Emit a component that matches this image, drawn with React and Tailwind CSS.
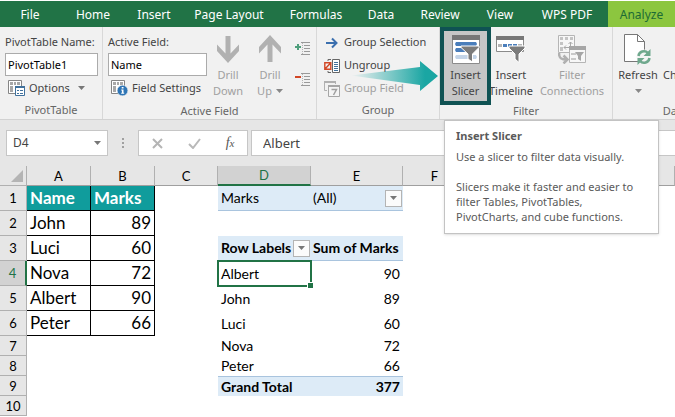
import React, { useState } from 'react';

const tabs = [
    { name: 'File', width: 'w-[60px]' },
    { name: 'Home', width: 'w-[66px]' },
    { name: 'Insert', width: 'w-[56px]' },
    { name: 'Page Layout', width: 'w-[94px]' },
    { name: 'Formulas', width: 'w-[80px]' },
    { name: 'Data', width: 'w-[50px]' },
    { name: 'Review', width: 'w-[68px]' },
    { name: 'View', width: 'w-[52px]' },
    { name: 'WPS PDF', width: 'w-[82px]' }
];

const columns = ['A', 'B', 'C', 'D', 'E', 'F', '', ''];

const rows = [
    { name: 'Name', mark: 'Marks', label: 'Marks', value: '(All)', kind: 'filter' },
    { name: 'John', mark: 89 },
    { name: 'Luci', mark: 60, label: 'Row Labels', value: 'Sum of Marks', kind: 'header' },
    { name: 'Nova', mark: 72, label: 'Albert', value: 90, kind: 'active' },
    { name: 'Albert', mark: 90, label: 'John', value: 89 },
    { name: 'Peter', mark: 66, label: 'Luci', value: 60 },
    { label: 'Nova', value: 72 },
    { label: 'Peter', value: 66 },
    { label: 'Grand Total', value: 377, kind: 'total' },
    {}
];

const Caret = ({ className = 'text-[#777777]' }) => (
    <svg width="7" height="4" viewBox="0 0 7 4" className={className} aria-hidden="true">
        <path d="M0 0h7L3.5 4z" fill="currentColor" />
    </svg>
);

const OptionsIcon = ({ info }) => (
    <svg width="17" height="16" viewBox="0 0 17 16" className="shrink-0" aria-hidden="true">
        <path d="M.5.5h13v13H.5z" fill="#fff" stroke="#858585" />
        <path d="M2 2h3v3H2zM6 2h2v3H6zM9 2h3v3H9zM2 6h3v6H2z" fill="#a8a8a8" />
        {info ? (
            <>
                <circle cx="11.5" cy="10.5" r="5.3" fill="#2e75b5" stroke="#f1f1f1" strokeWidth=".5" />
                <path d="M10.7 7h1.8v1.6h-1.8zM10.2 9.6h2.3v3.2h.7v1h-3v-1h.7v-2.2h-.7z" fill="#fff" />
            </>
        ) : (
            <>
                <path d="M7.5 6.5h9v9h-9z" fill="#fff" stroke="#41719c" />
                <path d="M7 6h10v2H7z" fill="#41719c" />
                <path d="M9 10h2v1H9zM9 13h2v1H9zM12 10h3v1h-3zM12 13h3v1h-3z" fill="#41719c" />
            </>
        )}
    </svg>
);

const DrillIcon = ({ up }) => (
    <svg width="22" height="28" viewBox="0 0 22 28" className={up ? '' : 'rotate-180'} aria-hidden="true">
        <path d="M11 0L22 12v6.500L13.500 9.500V27h-5V9.500L0 18.500V12z" fill="#b1b1b1" />
    </svg>
);

const ExpandIcon = ({ collapse }) => (
    <svg width="16" height="15" viewBox="0 0 16 15" aria-hidden="true">
        <path d="M6 1.500h9M9 4.500h6M9 7.500h6M9 10.500h6M6 13.500h9" stroke="#9a9a9a" />
        <path d="M7.500 2v11" stroke="#b5b5b5" strokeDasharray="1 1" />
        {collapse ? (
            <path d="M0 4h6v2H0z" fill="#d24726" />
        ) : (
            <path d="M2 3h2v2h2v2H4v2H2V7H0V5h2z" fill="#4f9f7c" />
        )}
    </svg>
);

const GroupSelectionIcon = () => (
    <svg width="16" height="14" viewBox="0 0 16 14" aria-hidden="true">
        <path d="M2 7h10M8 2.500L12.500 7 8 11.500" fill="none" stroke="#3b6fae" strokeWidth="2" />
    </svg>
);

const UngroupIcon = () => (
    <svg width="16" height="14" viewBox="0 0 16 14" aria-hidden="true">
        <path d="M.800 3.800h6v6.500h-6zM.800 10.300l6-6.500" fill="none" stroke="#d24726" strokeWidth="1.400" />
        <path d="M4 2V.500h3M4 12v1.500h3" fill="none" stroke="#666" />
        <path d="M8.500.500h7v13h-7z" fill="#fff" stroke="#666" />
        <path d="M10 3.500h4M10 5.500h4M10 7.500h4M10 9.500h4M10 11.500h4" stroke="#41719c" />
    </svg>
);

const GroupFieldIcon = () => (
    <svg width="16" height="16" viewBox="0 0 16 16" aria-hidden="true">
        <path d="M3 9.500H.500v-9h11V3" fill="none" stroke="#b0b0b0" />
        <path d="M0 0h12v2H0z" fill="#b0b0b0" />
        <path d="M4.500 4.500h11v11h-11z" fill="#f4f4f4" stroke="#a6a6a6" />
        <path d="M4 4h12v2H4z" fill="#a6a6a6" />
        <path d="M7.500 8.500h5L9.500 14" fill="none" stroke="#a0a0a0" strokeWidth="1.500" />
    </svg>
);

const SlicerIcon = () => (
    <svg width="28" height="29" viewBox="0 0 28 29" aria-hidden="true">
        <path d="M.500.500h27v28H.500z" fill="#fff" stroke="#8b8b8b" />
        <path d="M0 0h28v5H0z" fill="#777" />
        <path d="M4 7h20l1 2-1 2H4L3 9z" fill="#4a7ebb" />
        <path d="M4 13h10v4H4l-1-2z" fill="#4a7ebb" />
        <path d="M4 20h20l1 2-1 2H4l-1-2z" fill="#c3d4e8" />
        <path d="M9 11h18v1.500L20.500 19v8L16 24v-5l-7-6.500z" fill="#7b7b7b" stroke="#fff" />
    </svg>
);

const TimelineIcon = () => (
    <svg width="30" height="27" viewBox="0 0 30 27" aria-hidden="true">
        <path d="M.500.500h27v15H.500z" fill="#fff" stroke="#8b8b8b" />
        <path d="M0 0h28v4H0z" fill="#777" />
        <path d="M2 8h4v3H2zM22 8h4v3h-4z" fill="#b5b5b5" />
        <path d="M7 8h4v3H7zM12 8h4v3h-4zM17 8h4v3h-4z" fill="#4a7ebb" />
        <path d="M13 10h16v2l-6 6v8.500L19 23v-5l-6-6z" fill="#7b7b7b" stroke="#fff" />
    </svg>
);

const ConnectionsIcon = () => (
    <svg width="28" height="29" viewBox="0 0 28 29" aria-hidden="true">
        <path d="M.500.500h16v17H.500z" fill="#f7f7f7" stroke="#b5b5b5" />
        <path d="M2 2h3v3H2zM7 2h3v3H7zM12 2h3v3h-3zM2 7h3v3H2zM2 12h3v4H2z" fill="#c4c4c4" />
        <path d="M6 12.500h7M8 10.500l-2 2 2 2M12.500 12V7M10.500 9l2-2 2 2" fill="none" stroke="#a9a9a9" />
        <path d="M1 18c0 5 2 6.500 7 6.500M5.500 20.500l4 4-4 4" fill="none" stroke="#b0b0b0" strokeWidth="2.500" />
        <path d="M11.500 11.500h16v16h-16z" fill="#f7f7f7" stroke="#b5b5b5" />
        <path d="M11 11h17v4H11z" fill="#a6a6a6" />
        <path d="M13 18h5v2h-5zM13 23h5v2h-5z" fill="#c9c9c9" />
        <path d="M17 17h9l-3 4v5l-3-2v-3z" fill="#a6a6a6" />
    </svg>
);

const RefreshIcon = () => (
    <svg width="28" height="31" viewBox="0 0 28 31" aria-hidden="true">
        <path d="M.500.500h13l7 7v20H.500z" fill="#fff" stroke="#777" />
        <path d="M13.500.500v7h7" fill="none" stroke="#777" />
        <circle cx="20" cy="23" r="7.500" fill="#f4f4f4" />
        <path d="M14.500 22a5.500 5.500 0 019.500-3M25.500 24a5.500 5.500 0 01-9.500 3" fill="none" stroke="#6fa88d" strokeWidth="2.500" />
        <path d="M26.500 15v7h-7zM13.500 31v-7h7z" fill="#6fa88d" />
    </svg>
);

const PointerArrow = () => (
    <svg width="87" height="30" viewBox="0 0 87 30" className="absolute left-[34px] top-[34px] z-10 pointer-events-none" aria-hidden="true">
        <defs>
            <linearGradient id="pointer" x1="0" x2="1">
                <stop offset="0" stopColor="#1aa6a3" stopOpacity="0" />
                <stop offset=".85" stopColor="#1aa6a3" />
            </linearGradient>
        </defs>
        <path d="M0 14.500L69 6V0l18 15-18 15v-6z" fill="url(#pointer)" />
    </svg>
);

const Group = ({ title, className, children }) => (
    <section className={`relative flex shrink-0 flex-col pt-1 ${className}`}>
        <div className="flex h-[70px] items-start">{children}</div>
        <h2 className="h-5 text-center leading-5 text-[#666666]">{title}</h2>
    </section>
);

const BigButton = ({ icon, lines, caret, className = '' }) => (
    <button className={`flex h-[70px] shrink-0 flex-col items-center ${className}`}>
        <span className="flex h-9 items-center justify-center">{icon}</span>
        <span className="leading-4">{lines[0]}</span>
        <span className="flex h-4 items-center gap-1 leading-4">
            {lines[1]}
            {caret && <Caret className="text-[#888888]" />}
        </span>
    </button>
);

const Tooltip = () => (
    <div role="tooltip" className="absolute left-1 top-[93px] z-20 w-[215px] border border-[#c3c3c3] bg-white px-[11px] pt-[7px] pb-[9px] text-left leading-[15px] text-[#5a5a5a] shadow-sm">
        <p className="font-bold">Insert Slicer</p>
        <p className="mt-[6px]">Use a slicer to filter data visually.</p>
        <p className="mt-[15px]">Slicers make it faster and easier to filter Tables, PivotTables, PivotCharts, and cube functions.</p>
    </div>
);

const Ribbon = () => {
    const [tableName, setTableName] = useState('PivotTable1');
    const [field, setField] = useState('Name');

    return (
        <div className="flex h-[93px] border-b border-[#d2d2d2] bg-[#f1f1f1] text-[#444444]">
            <Group title="PivotTable" className="w-[103px] border-r border-[#d8d8d8]">
                <div className="w-full pl-[5px] pr-1">
                    <label htmlFor="table-name" className="block h-[22px] leading-[22px]">PivotTable Name:</label>
                    <input id="table-name" value={tableName} onChange={(e) => setTableName(e.target.value)} className="block h-[23px] w-full border border-[#ababab] bg-white px-[2px] text-black" />
                    <button className="flex h-6 items-center gap-1 pl-[3px]">
                        <OptionsIcon />
                        Options
                        <span className="pl-1"><Caret /></span>
                    </button>
                </div>
            </Group>

            <Group title="Active Field" className="w-[214px] border-r border-[#d8d8d8]">
                <div className="w-[104px] shrink-0 pl-[5px]">
                    <label htmlFor="active-field" className="block h-[22px] leading-[22px]">Active Field:</label>
                    <input id="active-field" value={field} onChange={(e) => setField(e.target.value)} className="block h-[23px] w-full border border-[#ababab] bg-white px-[2px] text-black" />
                    <button className="flex h-6 items-center gap-1 pl-[3px] whitespace-nowrap">
                        <OptionsIcon info />
                        Field Settings
                    </button>
                </div>
                <BigButton icon={<DrillIcon />} lines={['Drill', 'Down']} className="w-[42px] text-[#a0a0a0]" />
                <BigButton icon={<DrillIcon up />} lines={['Drill', 'Up']} caret className="w-[42px] text-[#a0a0a0]" />
                <div className="flex flex-col gap-4 pl-1 pt-[10px]">
                    <button aria-label="Expand field"><ExpandIcon /></button>
                    <button aria-label="Collapse field"><ExpandIcon collapse /></button>
                </div>
            </Group>

            <Group title="Group" className="w-[123px] border-r border-[#d8d8d8]">
                <div className="flex flex-col pl-[7px] whitespace-nowrap">
                    <button className="flex h-[23px] items-center gap-1"><GroupSelectionIcon />Group Selection</button>
                    <button className="flex h-[23px] items-center gap-1"><UngroupIcon />Ungroup</button>
                    <button className="flex h-[23px] items-center gap-1 text-[#a0a0a0]"><GroupFieldIcon />Group Field</button>
                </div>
                <PointerArrow />
            </Group>

            <Group title="Filter" className="w-[173px] border-r border-[#d8d8d8]">
                <BigButton icon={<SlicerIcon />} lines={['Insert', 'Slicer']} className="ml-1 w-[43px] bg-[#c6c6c6]" />
                <BigButton icon={<TimelineIcon />} lines={['Insert', 'Timeline']} className="w-[48px]" />
                <BigButton icon={<ConnectionsIcon />} lines={['Filter', 'Connections']} className="w-[74px] text-[#a0a0a0]" />
                <div className="absolute left-0 top-0 h-[78px] w-[51px] border-4 border-[#0f5253] pointer-events-none" />
                <Tooltip />
            </Group>

            <div className="min-w-0 flex-1 overflow-hidden">
                <Group title="Data" className="w-[124px]">
                    <BigButton icon={<RefreshIcon />} lines={['Refresh', '']} caret className="w-[50px]" />
                    <BigButton icon={null} lines={['Change Data', 'Source']} className="whitespace-nowrap" />
                </Group>
            </div>
        </div>
    );
};

const FormulaBar = () => {
    const [formula, setFormula] = useState('Albert');

    return (
        <div className="flex h-[46px] items-center bg-[#e6e6e6] pl-[6px] text-[#444444]">
            <button className="flex h-[26px] w-[102px] items-center justify-between border border-[#c6c6c6] bg-white px-[6px] text-xs">
                D4
                <Caret />
            </button>
            <span className="flex w-[30px] flex-col items-center gap-[2px]" aria-hidden="true">
                <i className="size-[2px] bg-[#a0a0a0]" />
                <i className="size-[2px] bg-[#a0a0a0]" />
                <i className="size-[2px] bg-[#a0a0a0]" />
            </span>
            <div className="flex h-[26px] w-[110px] items-center justify-around border border-[#c6c6c6] bg-white">
                <button aria-label="Cancel">
                    <svg width="11" height="11" viewBox="0 0 11 11"><path d="M1 1l9 9M10 1l-9 9" stroke="#b5b5b5" strokeWidth="2" /></svg>
                </button>
                <button aria-label="Enter">
                    <svg width="13" height="11" viewBox="0 0 13 11"><path d="M1 6l4 4 7-9" fill="none" stroke="#b9b9b9" strokeWidth="2" /></svg>
                </button>
                <button className="font-['Liberation_Serif',serif] text-sm italic leading-4 text-[#555555]">
                    f<sub className="bottom-0 text-[11px]">x</sub>
                </button>
            </div>
            <input aria-label="Formula" value={formula} onChange={(e) => setFormula(e.target.value)} className="ml-[3px] h-[26px] min-w-0 flex-1 border border-r-0 border-[#c6c6c6] bg-white px-[11px] text-[13px]" />
        </div>
    );
};

const FilterButton = ({ label }) => (
    <button aria-label={label} className="flex size-[17px] shrink-0 items-center justify-center border border-[#b4b4b4] bg-[#fbfbfb]">
        <Caret />
    </button>
);

const PivotCells = ({ row }) => {
    const { label, value, kind } = row;

    if (kind === 'filter') {
        return (
            <>
                <td className="border-b border-[#a9c4de] bg-[#ddebf7] px-[3px]">{label}</td>
                <td className="border-b border-[#a9c4de] bg-[#ddebf7] pl-[2px] pr-px">
                    <div className="flex items-center justify-between">{value}<FilterButton label="Filter marks" /></div>
                </td>
            </>
        );
    }
    if (kind === 'header') {
        return (
            <>
                <td className="border-b border-[#a9c4de] bg-[#ddebf7] pl-[3px] pr-px font-bold">
                    <div className="flex items-center justify-between whitespace-nowrap">{label}<FilterButton label="Filter row labels" /></div>
                </td>
                <td className="border-b border-[#a9c4de] bg-[#ddebf7] pl-[2px] font-bold whitespace-nowrap">{value}</td>
            </>
        );
    }
    if (kind === 'active') {
        return (
            <>
                <td className="relative px-[3px]">
                    {label}
                    <span className="absolute -inset-px border-2 border-[#217346]" />
                    <span className="absolute -bottom-[2px] -right-[2px] size-[6px] border-l border-t border-white bg-[#217346]" />
                </td>
                <td className="pr-[3px] text-right">{value}</td>
            </>
        );
    }
    if (kind === 'total') {
        return (
            <>
                <td className="border-t border-[#a9c4de] bg-[#ddebf7] px-[3px] font-bold">{label}</td>
                <td className="border-t border-[#a9c4de] bg-[#ddebf7] pr-[3px] text-right font-bold">{value}</td>
            </>
        );
    }
    return (
        <>
            <td className="px-[3px]">{label}</td>
            <td className="pr-[3px] text-right">{value}</td>
        </>
    );
};

const Sheet = () => (
    <table className="w-full table-fixed border-separate border-spacing-0 font-['Lato',sans-serif] text-sm leading-4 text-black">
        <colgroup>
            <col className="w-[27px]" />
            <col className="w-[64px]" />
            <col className="w-[64px]" />
            <col className="w-[63px]" />
            <col className="w-[93px]" />
            <col className="w-[92px]" />
            <col className="w-[64px]" />
            <col className="w-[192px]" />
            <col />
        </colgroup>
        <thead>
            <tr className="h-5 bg-[#e6e6e6] text-[13px]">
                <th className="border-b border-r border-[#b0b0b0]" aria-label="Select all">
                    <svg width="12" height="12" viewBox="0 0 12 12" className="ml-auto mr-[3px]"><path d="M12 0v12H0z" fill="#b4b4b4" /></svg>
                </th>
                {columns.map((c, i) => (
                    <th key={i} className={c === 'D' ? 'border-b-2 border-r border-b-[#217346] border-r-[#b0b0b0] bg-[#d2d2d2] font-normal text-[#217346]' : 'border-b border-r border-b-[#9f9f9f] border-r-[#b0b0b0] font-normal'}>
                        {c}
                    </th>
                ))}
            </tr>
        </thead>
        <tbody>
            {rows.map((row, i) => (
                <tr key={i} className={i < 6 ? 'h-[25px]' : 'h-5'}>
                    <th className={row.kind === 'active' ? 'border-b border-r-2 border-b-[#b0b0b0] border-r-[#217346] bg-[#d2d2d2] text-[13px] font-normal text-[#217346]' : 'border-b border-r border-[#b0b0b0] bg-[#e6e6e6] text-[13px] font-normal'}>
                        {i + 1}
                    </th>
                    {i === 0 && (
                        <>
                            <td className="border-b border-r border-black bg-[#109c9c] px-[3px] text-[17px] font-bold leading-5 text-white">{row.name}</td>
                            <td className="border-b border-r border-black bg-[#109c9c] px-[3px] text-[17px] font-bold leading-5 text-white">{row.mark}</td>
                        </>
                    )}
                    {i > 0 && i < 6 && (
                        <>
                            <td className="border-b border-r border-black px-[3px] text-[17px] leading-5">{row.name}</td>
                            <td className="border-b border-r border-black px-[3px] text-right text-[17px] leading-5">{row.mark}</td>
                        </>
                    )}
                    {i > 5 && (
                        <>
                            <td />
                            <td />
                        </>
                    )}
                    <td />
                    <PivotCells row={row} />
                    <td colSpan={3} />
                </tr>
            ))}
        </tbody>
    </table>
);

export default function App() {
    return (
        <div className="h-screen overflow-hidden bg-white font-['Noto_Sans',sans-serif] text-[11px]">
            <nav className="mt-px flex h-[26px] bg-[#217346] text-xs text-white">
                {tabs.map((tab) => (
                    <button key={tab.name} className={`shrink-0 whitespace-nowrap pt-[2px] ${tab.width}`}>{tab.name}</button>
                ))}
                <button className="flex-1 bg-[#8cc63f] pt-[2px] text-[#1c6b35]">Analyze</button>
            </nav>
            <Ribbon />
            <FormulaBar />
            <Sheet />
        </div>
    );
}
